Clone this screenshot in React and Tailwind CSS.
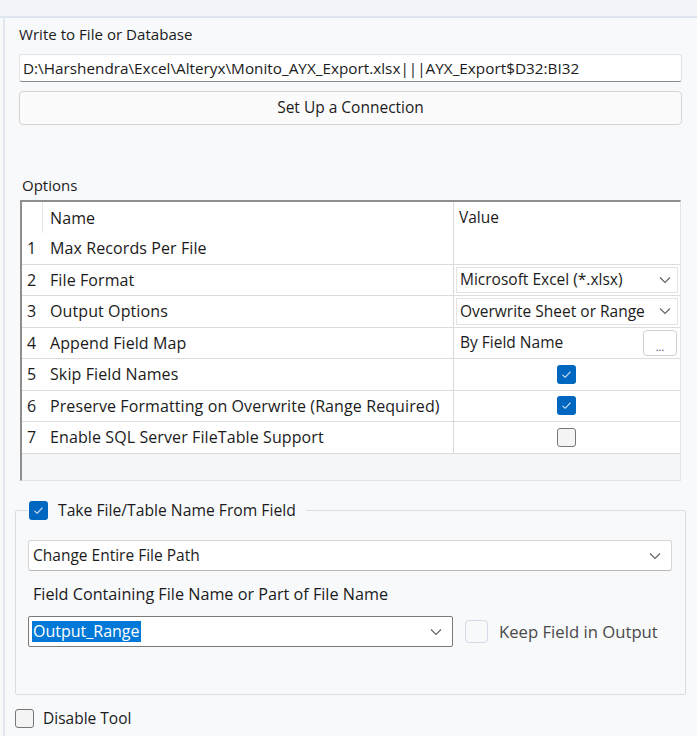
import React from 'react';

const font = { fontFamily: '"Open Sans", "Noto Sans", Arial, sans-serif' };

const Chevron = ({ className = '' }) => (
  <svg width="12" height="8" viewBox="0 0 12 8" className={className}>
    <path d="M1 1.5 L6 6.5 L11 1.5" fill="none" stroke="#606060" strokeWidth="1.1" />
  </svg>
);

const Check = ({ checked, disabled }) =>
  checked ? (
    <span className="flex h-[19px] w-[19px] items-center justify-center rounded-[3px] bg-[#0067c0]">
      <svg width="11" height="9" viewBox="0 0 11 9">
        <path d="M1.5 4.8 L4.2 7.3 L9.5 1.6" fill="none" stroke="#dbe8f8" strokeWidth="1.1" />
      </svg>
    </span>
  ) : (
    <span
      className={
        disabled
          ? 'block h-[23px] w-[23px] rounded-[4px] border border-[#d3dbe8] bg-[#f8f9fb]'
          : 'block h-[19px] w-[19px] rounded-[3px] border border-[#767676] bg-[#f4f4f4]'
      }
    />
  );

const rows = [
  { n: 1, name: 'Max Records Per File', value: null },
  { n: 2, name: 'File Format', value: 'select', text: 'Microsoft Excel (*.xlsx)' },
  { n: 3, name: 'Output Options', value: 'select', text: 'Overwrite Sheet or Range' },
  { n: 4, name: 'Append Field Map', value: 'button', text: 'By Field Name' },
  { n: 5, name: 'Skip Field Names', value: 'check', checked: true },
  { n: 6, name: 'Preserve Formatting on Overwrite (Range Required)', value: 'check', checked: true },
  { n: 7, name: 'Enable SQL Server FileTable Support', value: 'check', checked: false },
];

const ValueCell = ({ row }) => {
  if (row.value === 'select') {
    return (
      <div className="flex h-full items-center p-[2px]">
        <div className="flex h-full w-full items-center justify-between border border-[#e4e4e4] bg-white pl-[3px] pr-[6px]">
          <span>{row.text}</span>
          <Chevron />
        </div>
      </div>
    );
  }
  if (row.value === 'button') {
    return (
      <div className="flex h-full items-center justify-between pl-[6px] pr-[3px]">
        <span>{row.text}</span>
        <span className="flex h-[26px] w-[34px] items-end justify-center rounded-[4px] border border-[#d0d0d0] bg-white pb-[3px] text-[11px] leading-none text-[#5a4a6a]">
          ...
        </span>
      </div>
    );
  }
  if (row.value === 'check') {
    return (
      <div className="flex h-full items-center justify-center pr-[2px]">
        <Check checked={row.checked} />
      </div>
    );
  }
  return null;
};

export default function App() {
  return (
    <div className="h-[736px] w-[697px] overflow-hidden bg-[#f8f9fb] text-[15.5px] text-[#1b1b1b]" style={font}>
      <div className="h-[18px] border-b-2 border-[#dfe5ef] bg-[#f0f3f8]" />
      <div className="ml-[3px] h-[718px] border-l-2 border-[#e1e6ef] pl-[14px] pr-[15px]">
        <div className="pt-[6px] text-[15.1px] leading-[20px]">Write to File or Database</div>

        <div className="mt-[10px] flex h-[28px] items-center rounded-[3px] border border-[#e2e2e2] border-b-[#8a8a8a] bg-white pl-[3px] text-[15.3px]">
          D:\Harshendra\Excel\Alteryx\Monito_AYX_Export.xlsx|||AYX_Export$D32:BI32
        </div>

        <div className="mt-[9px] flex h-[34px] items-center justify-center rounded-[4px] border border-[#d4d4d4] bg-[#fbfbfb] text-[15.5px]">
          Set Up a Connection
        </div>

        <div className="mt-[50px] pl-[3px] text-[15px] leading-[20px]">Options</div>

        <div className="ml-[1px] mr-[1px] mt-[5px] h-[281px] border-l-2 border-t-2 border-b border-r border-l-[#8e8e8e] border-t-[#8e8e8e] border-b-[#e3e3e3] border-r-[#e3e3e3] bg-[#f5f6f8]">
          <div className="flex h-[31px] bg-white">
            <div className="w-[21px] border-r border-[#e6e6e6]" />
            <div className="flex-1 pl-[7px] pt-[4px] text-[16px] tracking-[0.1px]">Name</div>
            <div className="w-[227px] border-l border-[#dadada] pl-[5px] pt-[4px]">Value</div>
          </div>
          {rows.map((row) => (
            <div key={row.n} className="flex h-[31.5px] border-b border-[#dcdcdc] bg-white">
              <div className="flex w-[21px] items-center pl-[5px] text-[16px]">{row.n}</div>
              <div className="flex flex-1 items-center pl-[7px] text-[16px] tracking-[0.1px]">{row.name}</div>
              <div className="w-[227px] border-l border-[#dadada]">
                <ValueCell row={row} />
              </div>
            </div>
          ))}
        </div>

        <fieldset className="-ml-[4px] -mr-[4px] mt-[19px] h-[195px] rounded-[2px] border border-[#d9dde4] pb-0 pl-[12px] pr-[13px] pt-[20px]">
          <legend className="ml-0 flex items-center gap-[10px] pl-px pr-[10px]">
            <Check checked />
            <span className="text-[15.7px] leading-[20px]">Take File/Table Name From Field</span>
          </legend>

          <div className="flex h-[31px] items-center justify-between rounded-[3px] border border-[#d6d6d6] border-b-[#b8b8b8] bg-white pl-[4px] pr-[10px]">
            <span>Change Entire File Path</span>
            <Chevron />
          </div>

          <div className="mt-[13px] pl-[5px] text-[16.2px] leading-[20px]">Field Containing File Name or Part of File Name</div>

          <div className="mt-[12px] flex items-center">
            <div className="flex h-[31px] w-[425px] items-center justify-between rounded-[2px] border border-[#7a7a7a] bg-white pl-[3px] pr-[10px]">
              <span className="bg-[#0078d7] px-[1px] text-[16px] leading-[21px] text-white">Output_Range</span>
              <Chevron />
            </div>
            <div className="ml-[12px] flex items-center gap-[11px] text-[16.7px] text-[#4a4a4a]">
              <Check checked={false} disabled />
              <span>Keep Field in Output</span>
            </div>
          </div>
        </fieldset>

        <div className="-ml-[4px] mt-[12px] flex items-center gap-[9px]">
          <Check checked={false} />
          <span>Disable Tool</span>
        </div>
      </div>
    </div>
  );
}
